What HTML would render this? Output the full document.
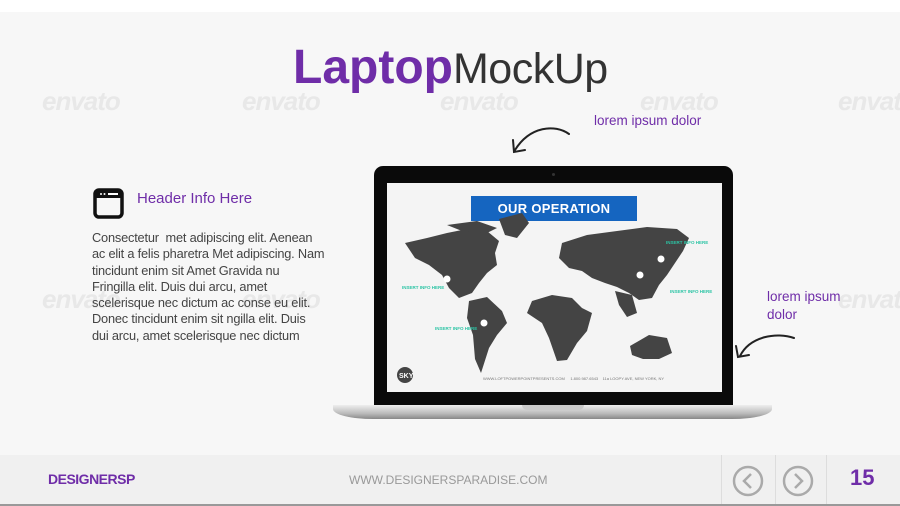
<!DOCTYPE html>
<html><head><meta charset="utf-8"><style>
*{margin:0;padding:0;box-sizing:border-box}
body{width:900px;height:506px;overflow:hidden;background:#f7f7f7;font-family:"Liberation Sans",sans-serif;position:relative}
.abs{position:absolute}
.wm{position:absolute;color:#e8e8e8;font-size:26px;font-style:italic;font-weight:bold;letter-spacing:-1px}
</style></head><body>
<div class="abs" style="left:0;top:0;width:900px;height:12px;background:#fff"></div>
<div class="wm" style="left:42px;top:86px">envato</div>
<div class="wm" style="left:242px;top:86px">envato</div>
<div class="wm" style="left:440px;top:86px">envato</div>
<div class="wm" style="left:640px;top:86px">envato</div>
<div class="wm" style="left:838px;top:86px">envato</div>
<div class="wm" style="left:42px;top:284px">envato</div>
<div class="wm" style="left:242px;top:284px">envato</div>
<div class="wm" style="left:838px;top:284px">envato</div>

<div class="abs" style="left:293px;top:40px;font-size:48px;line-height:56px;white-space:nowrap"><span style="color:#6f2da8;font-weight:bold">Laptop</span><span style="color:#333;font-size:43px;letter-spacing:-0.5px">MockUp</span></div>

<div class="abs" style="left:594px;top:113px;color:#6f2da8;font-size:13.5px">lorem ipsum dolor</div>
<svg class="abs" style="left:505px;top:122px" width="70" height="34" viewBox="0 0 70 34"><path d="M64 12 C50 2 25 4 10 28 M8 18 L9 30 L20 28" fill="none" stroke="#222" stroke-width="2" stroke-linecap="round"/></svg>

<div class="abs" style="left:767px;top:288px;color:#6f2da8;font-size:13.5px;line-height:18px">lorem ipsum<br>dolor</div>
<svg class="abs" style="left:732px;top:330px" width="68" height="32" viewBox="0 0 68 32"><path d="M62 8 C45 2 18 6 8 26 M4 16 L6 27 L17 25" fill="none" stroke="#222" stroke-width="2" stroke-linecap="round"/></svg>

<svg class="abs" style="left:93px;top:188px" width="31" height="31" viewBox="0 0 31 31"><rect x="2" y="2" width="27" height="27" rx="4" fill="none" stroke="#111" stroke-width="3.5"/><rect x="2" y="2" width="27" height="8" fill="#111"/><circle cx="8" cy="6" r="1" fill="#fff"/><circle cx="11.5" cy="6" r="1" fill="#fff"/><rect x="15" y="5" width="10" height="2" fill="#fff"/></svg>
<div class="abs" style="left:137px;top:190px;color:#6f2da8;font-size:15px">Header Info Here</div>
<div class="abs" style="left:92px;top:230px;width:250px;color:#444;font-size:12.8px;line-height:16.3px;white-space:nowrap;letter-spacing:-0.2px">Consectetur&nbsp; met adipiscing elit. Aenean<br>ac elit a felis pharetra Met adipiscing. Nam<br>tincidunt enim sit Amet Gravida nu<br>Fringilla elit. Duis dui arcu, amet<br>scelerisque nec dictum ac conse eu elit.<br>Donec tincidunt enim sit ngilla elit. Duis<br>dui arcu, amet scelerisque nec dictum</div>

<div class="abs" style="left:374px;top:166px;width:359px;height:242px;background:#0a0a0a;border-radius:9px 9px 0 0"></div>
<div class="abs" style="left:552px;top:173px;width:3px;height:3px;border-radius:50%;background:#333"></div>
<div class="abs" style="left:387px;top:183px;width:335px;height:209px;background:#f4f4f4"></div>
<div class="abs" style="left:471px;top:196px;width:166px;height:25px;background:#1565c0;color:#fff;font-weight:bold;font-size:13px;text-align:center;line-height:25px;letter-spacing:0.3px">OUR OPERATION</div>
<svg class="abs" style="left:387px;top:183px" width="335" height="209" viewBox="0 0 335 209">
<g fill="#444">
<path d="M18 60 L40 55 L60 50 L80 46 L100 48 L112 58 L108 70 L110 82 L100 90 L92 100 L85 110 L72 115 L62 105 L55 92 L42 82 L28 75 Z"/>
<path d="M60 42 L90 38 L110 45 L100 50 L75 48 Z"/>
<path d="M112 36 L135 30 L142 40 L130 55 L118 52 Z"/>
<path d="M82 118 L100 114 L115 128 L120 140 L110 152 L102 165 L94 190 L88 176 L86 152 L80 135 Z"/>
<path d="M175 60 L200 52 L230 48 L260 44 L290 46 L302 55 L296 68 L288 80 L280 92 L272 102 L265 115 L252 117 L242 110 L230 104 L218 100 L205 95 L195 88 L182 85 L172 75 Z"/>
<path d="M145 118 L165 112 L185 115 L195 125 L205 130 L200 148 L190 160 L180 177 L170 178 L162 155 L155 140 L140 130 Z"/>
<path d="M243 163 L262 152 L280 155 L285 170 L272 176 L256 176 L245 172 Z"/>
<path d="M228 108 L245 112 L250 130 L240 134 L232 122 Z"/>
</g>
<g fill="#2cc4a5" font-size="4.5" font-weight="bold" font-family="Liberation Sans"><text x="279" y="61">INSERT INFO HERE</text><text x="15" y="106">INSERT INFO HERE</text><text x="48" y="147">INSERT INFO HERE</text><text x="283" y="110">INSERT INFO HERE</text></g>
<g fill="#fff"><circle cx="60" cy="96" r="3.5"/><circle cx="97" cy="140" r="3.5"/><circle cx="253" cy="92" r="3.5"/><circle cx="274" cy="76" r="3.5"/></g>
<circle cx="18" cy="192" r="8" fill="#444"/><text x="12" y="195" fill="#fff" font-size="7" font-weight="bold" font-family="Liberation Sans">SKY</text>
<text x="96" y="197" fill="#777" font-size="4" font-family="Liberation Sans">WWW.LOFTPOWERPOINTPRESENTS.COM &#160;&#160;&#160; 1.800.987.6543 &#160;&#160; 11a LOOPY AVE, NEW YORK, NY</text>
</svg>
<div class="abs" style="left:333px;top:405px;width:439px;height:14px;background:linear-gradient(#eee,#bbb 60%,#888);border-radius:0 0 40px 40px / 0 0 10px 10px"></div>
<div class="abs" style="left:522px;top:405px;width:62px;height:5px;background:#c9c9c9;border-radius:0 0 6px 6px"></div>

<div class="abs" style="left:0;top:455px;width:900px;height:51px;background:#f0f0f0"></div>
<div class="abs" style="left:48px;top:471px;color:#6f2da8;font-weight:bold;font-size:14px;letter-spacing:-0.5px">DESIGNERSP</div>
<div class="abs" style="left:349px;top:473px;color:#999;font-size:12px">WWW.DESIGNERSPARADISE.COM</div>
<div class="abs" style="left:721px;top:455px;width:1px;height:51px;background:#ddd"></div>
<div class="abs" style="left:775px;top:455px;width:1px;height:51px;background:#ddd"></div>
<div class="abs" style="left:826px;top:455px;width:1px;height:51px;background:#ddd"></div>
<svg class="abs" style="left:731px;top:464px" width="34" height="34"><circle cx="17" cy="17" r="14" fill="none" stroke="#aaa" stroke-width="2.5"/><path d="M20 10 L13 17 L20 24" fill="none" stroke="#aaa" stroke-width="2.5"/></svg>
<svg class="abs" style="left:781px;top:464px" width="34" height="34"><circle cx="17" cy="17" r="14" fill="none" stroke="#aaa" stroke-width="2.5"/><path d="M14 10 L21 17 L14 24" fill="none" stroke="#aaa" stroke-width="2.5"/></svg>
<div class="abs" style="left:850px;top:465px;color:#6f2da8;font-weight:bold;font-size:22px">15</div>
<div class="abs" style="left:0;top:504px;width:900px;height:2px;background:#999"></div>
</body></html>
